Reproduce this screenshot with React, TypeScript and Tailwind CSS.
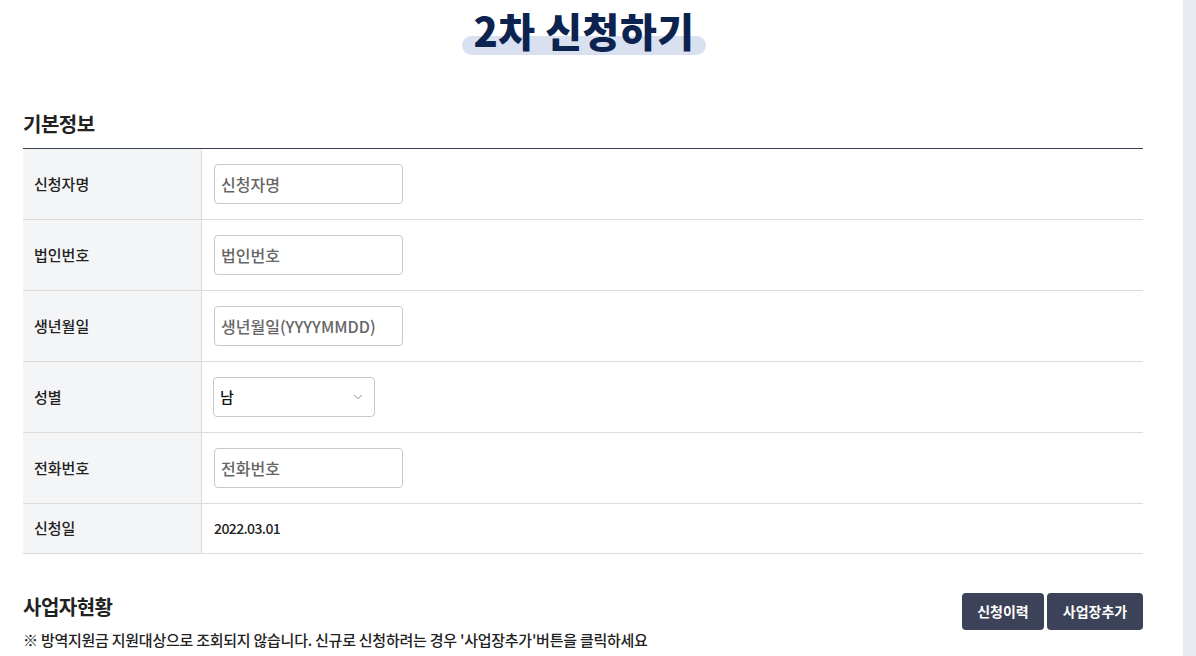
import { ChevronDown } from "lucide-react";

const font = { fontFamily: '"Noto Sans CJK KR", "Noto Sans", sans-serif' };

type Row = { label: string; kind: "input" | "select" | "text"; value: string };

const rows: Row[] = [
  { label: "신청자명", kind: "input", value: "신청자명" },
  { label: "법인번호", kind: "input", value: "법인번호" },
  { label: "생년월일", kind: "input", value: "생년월일(YYYYMMDD)" },
  { label: "성별", kind: "select", value: "남" },
  { label: "전화번호", kind: "input", value: "전화번호" },
  { label: "신청일", kind: "text", value: "2022.03.01" },
];

function Field({ row }: { row: Row }) {
  if (row.kind === "input") {
    return (
      <input
        className="h-10 w-[189px] rounded-[4px] border border-[#c8c8c8] px-[6px] text-[16px] font-medium text-[#222] placeholder:text-[#666] outline-none"
        placeholder={row.value}
        style={font}
      />
    );
  }
  if (row.kind === "select") {
    return (
      <div className="-ml-px flex h-10 w-[162px] items-center justify-between rounded-[4px] border border-[#c8c8c8] pl-[6px] pr-[9px]">
        <span className="text-[15px] font-medium text-[#111]">{row.value}</span>
        <ChevronDown className="h-3.5 w-3.5 text-[#777]" strokeWidth={1.5} />
      </div>
    );
  }
  return <span className="text-[14px] font-medium tracking-[-0.6px] text-[#222]">{row.value}</span>;
}

export default function App() {
  return (
    <div className="flex h-[656px] w-[1196px] overflow-hidden bg-white" style={font}>
      <main className="w-[1183px] shrink-0">
        <div className="ml-[23px] w-[1120px]">
          <div className="flex justify-center pt-[2px]">
            <div className="relative ml-[2px] inline-block px-[11px]">
              <span className="absolute bottom-[3px] left-0 right-0 h-[19px] rounded-full bg-[#d9e1f0]" />
              <h1 className="relative text-[40px] font-black leading-[56px] tracking-[0.5px] text-[#0c2350]">
                2차 신청하기
              </h1>
            </div>
          </div>

          <h2 className="mt-[51px] text-[20px] font-bold leading-[30px] tracking-[-0.5px] text-[#222]">기본정보</h2>

          <div className="mt-[9px] border-t border-[#3a4150]">
            {rows.map((row) => (
              <div
                key={row.label}
                className={`flex border-b border-[#dcdcdc] ${row.kind === "text" ? "h-[50px]" : "h-[71px]"}`}
              >
                <div className="flex w-[179px] items-center border-r border-[#dcdcdc] bg-[#f4f5f7] pl-[11px] text-[15px] font-medium text-[#222]">
                  {row.label}
                </div>
                <div className="flex flex-1 items-center pl-[12px]">
                  <Field row={row} />
                </div>
              </div>
            ))}
          </div>

          <div className="mt-[38px] flex items-start justify-between">
            <div>
              <h2 className="text-[20px] font-bold leading-[30px] tracking-[-0.5px] text-[#222]">사업자현황</h2>
              <p className="mt-[7px] text-[15px] font-medium tracking-[-0.25px] text-[#222]">
                ※ 방역지원금 지원대상으로 조회되지 않습니다. 신규로 신청하려는 경우 '사업장추가'버튼을 클릭하세요
              </p>
            </div>
            <div className="flex gap-[3px] pt-[1px]">
              <button className="h-[37px] w-[82px] rounded-[4px] bg-[#3c4257] text-[14px] font-bold text-white">
                신청이력
              </button>
              <button className="h-[37px] w-[96px] rounded-[4px] bg-[#3c4257] text-[14px] font-bold text-white">
                사업장추가
              </button>
            </div>
          </div>
        </div>
      </main>
      <div className="w-[13px] shrink-0 bg-[#e7ebef]" />
    </div>
  );
}
